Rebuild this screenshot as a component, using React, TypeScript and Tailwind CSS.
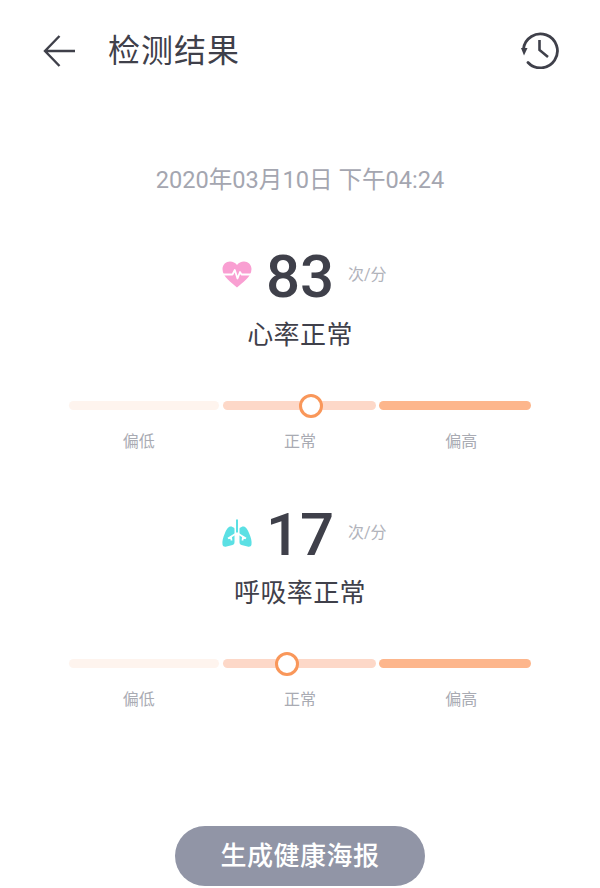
const FONT = "font-['Roboto','Noto_Sans_CJK_SC',sans-serif]";

function HeartIcon() {
  return (
    <svg width="30" height="27" viewBox="0 0 30 27">
      <path
        d="M15 26.500 C10 22 0.500 16 0.500 8 C0.500 3.500 4 0.500 8 0.500 C10.800 0.500 13.500 1.800 15 4 C16.500 1.800 19.200 0.500 22 0.500 C26 0.500 29.500 3.500 29.500 8 C29.500 16 20 22 15 26.500 Z"
        fill="#f99fd2"
      />
      <path
        d="M1 13.500 H10.500 L12.800 9 L15.500 17.500 L18 11 L19.500 13.500 H29"
        fill="none"
        stroke="#ffffff"
        strokeWidth="1.800"
        strokeLinejoin="round"
      />
    </svg>
  );
}

function LungsIcon() {
  return (
    <svg width="30" height="29" viewBox="0 0 30 29">
      <path
        d="M10.500 8 C7 6.500 5 9.500 3 14 C1 18.500 0 22.500 0.500 25.500 C0.800 27.500 2.500 28 4.500 27.500 L10.500 26 C12 25.500 12.500 24.500 12.500 23 V10 C12.500 9 12 8.500 10.500 8 Z"
        fill="#5be0e4"
      />
      <path
        d="M19.500 8 C23 6.500 25 9.500 27 14 C29 18.500 30 22.500 29.500 25.500 C29.200 27.500 27.500 28 25.500 27.500 L19.500 26 C18 25.500 17.500 24.500 17.500 23 V10 C17.500 9 18 8.500 19.500 8 Z"
        fill="#5be0e4"
      />
      <path d="M15 0.500 V15" fill="none" stroke="#5be0e4" strokeWidth="2" />
      <path d="M15 14 L6 19.500 M15 14 L24 19.500 M9 17.500 L9.500 21.500 M21 17.500 L20.500 21.500" fill="none" stroke="#ffffff" strokeWidth="1.800" />
    </svg>
  );
}

function Reading({
  icon,
  value,
  title,
  knob,
  className,
}: {
  icon: React.ReactNode;
  value: string;
  title: string;
  knob: string;
  className: string;
}) {
  return (
    <section className={className}>
      <div className="flex h-[60px] items-center justify-center">
        <div className="relative">
          <span className="block text-[60px] leading-[60px] font-medium text-[#3f404a]">{value}</span>
          <span className="absolute top-[14px] left-[-44px]">{icon}</span>
          <span className="absolute top-[18px] left-[82px] text-[16px] leading-[20px] whitespace-nowrap text-[#b1b3bb]">
            次/分
          </span>
        </div>
      </div>
      <h2 className="mt-[10px] text-center text-[26px] leading-[36px] font-normal tracking-[0.4px] text-[#3f404a]">
        {title}
      </h2>

      <div className="relative mx-[69px] mt-[48px] flex h-[9px]">
        <div className="mr-[4px] w-[150px] rounded-full bg-[#fef4ee]" />
        <div className="mr-[3px] w-[153px] rounded-full bg-[#fdd8c8]" />
        <div className="flex-1 rounded-full bg-[#fdb68c]" />
        <div className={knob} />
      </div>

      <div className="mx-[58px] mt-[21px] flex text-center text-[16px] leading-[22px] text-[#a9abb3]">
        <span className="flex-1">偏低</span>
        <span className="flex-1">正常</span>
        <span className="flex-1">偏高</span>
      </div>
    </section>
  );
}

export default function App() {
  return (
    <div className={`${FONT} flex h-[888px] w-[600px] flex-col overflow-hidden bg-white`}>
      <header className="flex items-center pt-[26px] pr-[41px] pl-[43px]">
        <svg width="34" height="34" viewBox="0 0 34 34" fill="none" stroke="#3f404a" strokeWidth="2.400">
          <path d="M32 17 H2.500 M16.500 2 L2 17 L16.500 32" />
        </svg>
        <h1 className="mt-[1px] ml-[31px] flex-1 text-[32px] leading-[48px] font-normal tracking-[1px] text-[#3f404a]">
          检测结果
        </h1>
        <svg className="mb-[2px]" width="38" height="38" viewBox="0 0 38 38" fill="none" stroke="#3f404a" strokeWidth="2.800">
          <path d="M2.500 18 A17 17 0 1 1 7 31.500" strokeLinecap="round" />
          <path d="M18.500 9 V19 L27 26" strokeWidth="2.600" />
          <path d="M0 17 H6.500 L3 24.500 Z" fill="#3f404a" stroke="none" />
        </svg>
      </header>

      <p className="mt-[89px] text-center text-[23.600px] leading-[32px] text-[#a4a6b0]">2020年03月10日 下午04:24</p>

      <Reading
        className="mt-[51px]"
        icon={<HeartIcon />}
        value="83"
        title="心率正常"
        knob="absolute top-[-7px] left-[230px] h-[24px] w-[24px] rounded-full border-[3px] border-[#f9975a] bg-white"
      />
      <Reading
        className="mt-[52px]"
        icon={<LungsIcon />}
        value="17"
        title="呼吸率正常"
        knob="absolute top-[-7px] left-[206px] h-[24px] w-[24px] rounded-full border-[3px] border-[#f9975a] bg-white"
      />

      <div className="mt-auto flex justify-center pb-[2px]">
        <button className="h-[60px] w-[250px] rounded-full bg-[#9195a6] text-[26px] font-medium tracking-[0.5px] text-white">
          生成健康海报
        </button>
      </div>
    </div>
  );
}
